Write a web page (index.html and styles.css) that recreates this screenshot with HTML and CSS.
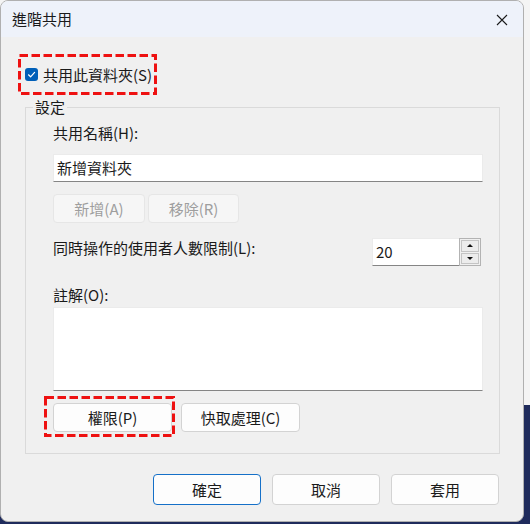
FILE: index.html
```html
<!DOCTYPE html>
<html lang="zh-Hant">
<head>
<meta charset="utf-8">
<title>進階共用</title>
<link rel="stylesheet" href="styles.css">
</head>
<body>
<div class="window">
  <div class="titlebar">
    <span class="title">進階共用</span>
    <svg class="close" width="12" height="12" viewBox="0 0 12 12"><path d="M1 1L11 11M11 1L1 11" stroke="#1b1b1b" stroke-width="1.1" fill="none"/></svg>
  </div>
  <div class="content">
    <div class="share-toggle">
      <span class="checkbox"><svg width="9" height="9" viewBox="0 0 9 9"><path d="M1.5 4.8L3.6 6.8L7.6 2.4" stroke="#fff" stroke-width="1.2" fill="none" stroke-linecap="round" stroke-linejoin="round"/></svg></span>
      <span class="toggle-text">共用此資料夾(S)</span>
      <svg class="mark mark-toggle" width="139" height="41" viewBox="0 0 139 41"><rect x="1.5" y="1.5" width="136" height="38" fill="none" stroke="#ee1111" stroke-width="3" stroke-dasharray="8.5 3.5"/></svg>
    </div>
    <fieldset class="group">
      <legend class="group-title">設定</legend>
      <div class="label">共用名稱(H):</div>
      <div class="field name-field">新增資料夾</div>
      <div class="btn-row">
        <button class="btn disabled add-btn">新增(A)</button>
        <button class="btn disabled remove-btn">移除(R)</button>
      </div>
      <div class="limit-row">
        <span class="label">同時操作的使用者人數限制(L):</span>
        <div class="spinner">
          <div class="field spin-field">20</div>
          <div class="spin-btns">
            <span class="spin up"></span>
            <span class="spin down"></span>
          </div>
        </div>
      </div>
      <div class="label comment-label">註解(O):</div>
      <div class="field comment-field"></div>
      <div class="btn-row row2">
        <div class="annotated">
          <button class="btn wide-btn">權限(P)</button>
          <svg class="mark mark-perm" width="131" height="41" viewBox="0 0 131 41"><rect x="1.5" y="1.5" width="128" height="38" fill="none" stroke="#ee1111" stroke-width="3" stroke-dasharray="8.5 3.5"/></svg>
        </div>
        <button class="btn wide-btn">快取處理(C)</button>
      </div>
    </fieldset>
    <div class="footer">
      <button class="btn dlg-btn primary">確定</button>
      <button class="btn dlg-btn">取消</button>
      <button class="btn dlg-btn">套用</button>
    </div>
  </div>
</div>
</body>
</html>
```
FILE: styles.css
```css
html, body {
  margin: 0;
  padding: 0;
}
body {
  width: 530px;
  height: 524px;
  overflow: hidden;
  background: linear-gradient(to bottom, #f4f4f4 0, #f4f4f4 405px, #1f2b5c 405px);
  font-family: "Noto Sans CJK TC", "Noto Sans", sans-serif;
  font-size: 15px;
  color: #1a1a1a;
}
.window {
  box-sizing: border-box;
  width: 524px;
  height: 522px;
  border: 1px solid #b0b0b0;
  border-radius: 8px;
  background: #f0f0f0;
  overflow: hidden;
}
.titlebar {
  height: 36px;
  background: #eef2fa;
  display: flex;
  align-items: center;
  justify-content: space-between;
  padding: 0 15px 0 11px;
}
.title {
  line-height: 20px;
  font-size: 15px;
  color: #1a1a1a;
}
.close {
  display: block;
  margin-top: 1px;
}
.content {
  display: flex;
  flex-direction: column;
  align-items: flex-start;
}
.share-toggle {
  position: relative;
  box-sizing: border-box;
  margin: 17px 0 0 17px;
  width: 139px;
  height: 41px;
  display: flex;
  align-items: center;
  padding-left: 7px;
}
.mark {
  position: absolute;
  display: block;
  pointer-events: none;
}
.mark-toggle {
  left: 0;
  top: 0;
}
.checkbox {
  width: 13px;
  height: 13px;
  border-radius: 3px;
  background: #005fb8;
  display: flex;
  align-items: center;
  justify-content: center;
  margin-right: 5px;
}
.checkbox svg {
  display: block;
}
.toggle-text {
  line-height: 20px;
  white-space: nowrap;
}
.group {
  box-sizing: border-box;
  width: 475px;
  margin: 2px 0 0 24px;
  padding: 6px 16px 21px 27px;
  border: 1px solid #dadada;
  min-width: 0;
}
.group-title {
  margin-left: -20px;
  padding: 0 2px;
  line-height: 20px;
}
.label {
  line-height: 20px;
  white-space: nowrap;
}
.field {
  box-sizing: border-box;
  background: #ffffff;
  border: 1px solid #ebebeb;
  border-bottom: 1px solid #858585;
}
.name-field {
  margin-top: 11px;
  height: 28px;
  line-height: 26px;
  padding-left: 3px;
}
.btn-row {
  display: flex;
  margin-top: 12px;
  gap: 3px;
}
.btn {
  box-sizing: border-box;
  font-family: inherit;
  font-size: 15px;
  color: #1a1a1a;
  background: #fdfdfd;
  border: 1px solid #d3d3d3;
  border-radius: 4px;
  padding: 0;
  line-height: 20px;
  margin: 0;
}
.btn.disabled {
  background: #f6f6f6;
  border-color: #e6e6e6;
  color: #9e9e9e;
}
.add-btn {
  width: 92px;
  height: 29px;
}
.remove-btn {
  width: 91px;
  height: 29px;
}
.limit-row {
  margin-top: 15px;
  display: flex;
  justify-content: space-between;
  align-items: flex-start;
}
.spinner {
  display: flex;
  margin-right: 2px;
}
.spin-field {
  width: 87px;
  height: 28px;
  line-height: 26px;
  padding-left: 3px;
  border-right: none;
}
.spin-btns {
  box-sizing: border-box;
  width: 22px;
  height: 28px;
  border: 1px solid #b3b3b3;
  padding: 1px;
  display: flex;
  flex-direction: column;
  gap: 1px;
}
.spin {
  flex: 1;
  border: 1px solid #c4c4c4;
  background: #ececec;
  display: flex;
  align-items: center;
  justify-content: center;
}
.spin::before {
  content: "";
  width: 0;
  height: 0;
  border-left: 3px solid transparent;
  border-right: 3px solid transparent;
}
.spin.up::before {
  border-bottom: 3px solid #111;
}
.spin.down::before {
  border-top: 3px solid #111;
}
.comment-label {
  margin-top: 19px;
}
.comment-field {
  margin-top: 2px;
  height: 84px;
}
.row2 {
  gap: 9px;
}
.annotated {
  position: relative;
  display: flex;
}
.mark-perm {
  left: -9px;
  top: -7px;
}
.wide-btn {
  width: 119px;
  height: 29px;
}
.footer {
  align-self: stretch;
  display: flex;
  justify-content: flex-end;
  gap: 11px;
  margin-top: 20px;
  padding-right: 24px;
}
.dlg-btn {
  width: 108px;
  height: 31px;
}
.dlg-btn.primary {
  border-color: #1570c8;
}
```
